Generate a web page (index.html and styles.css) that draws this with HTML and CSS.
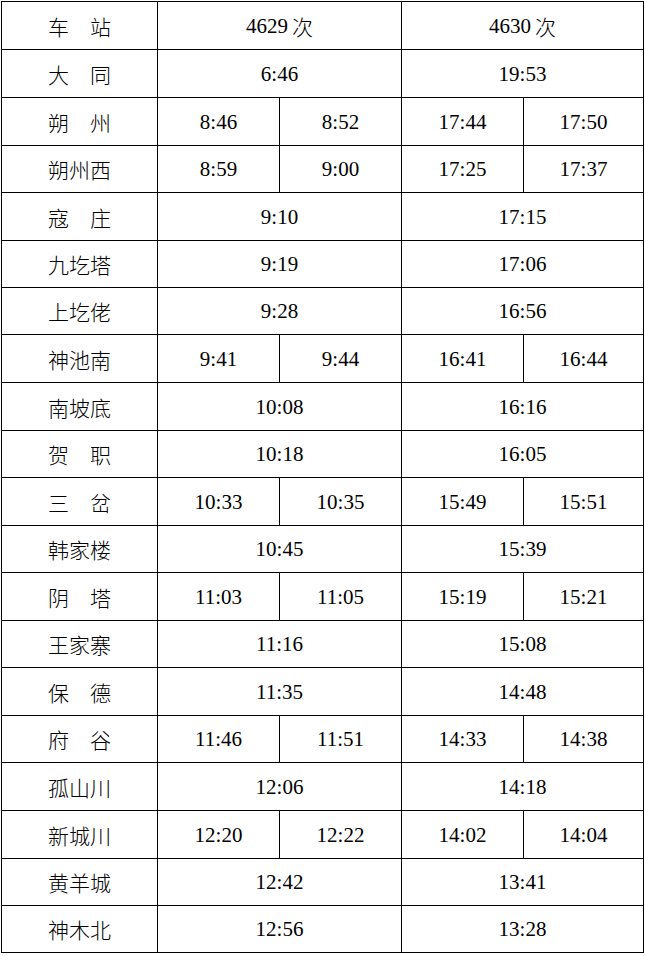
FILE: index.html
```html
<!DOCTYPE html>
<html>
<head>
<meta charset="utf-8">
<title>4629/4630 次时刻表</title>
<link rel="stylesheet" href="styles.css">
</head>
<body>
<div class="timetable">
  <div class="c st">车　站</div><div class="c s2">4629 <span class="cj">次</span></div><div class="c s2">4630 <span class="cj">次</span></div>
  <div class="c st">大　同</div><div class="c s2">6:46</div><div class="c s2">19:53</div>
  <div class="c st">朔　州</div><div class="c">8:46</div><div class="c">8:52</div><div class="c">17:44</div><div class="c">17:50</div>
  <div class="c st">朔州西</div><div class="c">8:59</div><div class="c">9:00</div><div class="c">17:25</div><div class="c">17:37</div>
  <div class="c st">寇　庄</div><div class="c s2">9:10</div><div class="c s2">17:15</div>
  <div class="c st">九圪塔</div><div class="c s2">9:19</div><div class="c s2">17:06</div>
  <div class="c st">上圪佬</div><div class="c s2">9:28</div><div class="c s2">16:56</div>
  <div class="c st">神池南</div><div class="c">9:41</div><div class="c">9:44</div><div class="c">16:41</div><div class="c">16:44</div>
  <div class="c st">南坡底</div><div class="c s2">10:08</div><div class="c s2">16:16</div>
  <div class="c st">贺　职</div><div class="c s2">10:18</div><div class="c s2">16:05</div>
  <div class="c st">三　岔</div><div class="c">10:33</div><div class="c">10:35</div><div class="c">15:49</div><div class="c">15:51</div>
  <div class="c st">韩家楼</div><div class="c s2">10:45</div><div class="c s2">15:39</div>
  <div class="c st">阴　塔</div><div class="c">11:03</div><div class="c">11:05</div><div class="c">15:19</div><div class="c">15:21</div>
  <div class="c st">王家寨</div><div class="c s2">11:16</div><div class="c s2">15:08</div>
  <div class="c st">保　德</div><div class="c s2">11:35</div><div class="c s2">14:48</div>
  <div class="c st">府　谷</div><div class="c">11:46</div><div class="c">11:51</div><div class="c">14:33</div><div class="c">14:38</div>
  <div class="c st">孤山川</div><div class="c s2">12:06</div><div class="c s2">14:18</div>
  <div class="c st">新城川</div><div class="c">12:20</div><div class="c">12:22</div><div class="c">14:02</div><div class="c">14:04</div>
  <div class="c st">黄羊城</div><div class="c s2">12:42</div><div class="c s2">13:41</div>
  <div class="c st">神木北</div><div class="c s2">12:56</div><div class="c s2">13:28</div>
</div>
</body>
</html>
```
FILE: styles.css
```css
html, body {
  margin: 0;
  padding: 0;
  background: #fff;
}
body {
  padding: 1px 0 0 1px;
  font-family: "Liberation Serif", "Times New Roman", "DejaVu Serif", serif;
  font-size: 21px;
  color: #000;
}
.timetable {
  display: grid;
  width: max-content;
  grid-template-columns: 155px 121px 121px 121px 119px;
  grid-template-rows: 47px 47px 47px 46px 47px 46px 46px 47px 47px 46px 47px 46px 47px 46px 47px 46px 47px 47px 46px 46px;
  gap: 1px;
  padding: 1px;
  background: #000;
}
.c {
  background: #fff;
  display: flex;
  align-items: center;
  justify-content: center;
  line-height: 1;
  white-space: nowrap;
  padding-top: 1px;
}
.s2 {
  grid-column: span 2;
}
.st,
.cj {
  font-family: "Noto Sans CJK SC", "Noto Sans CJK TC", sans-serif;
  font-weight: 200;
  font-size: 21px;
}
.cj {
  margin-left: 4px;
}
```
